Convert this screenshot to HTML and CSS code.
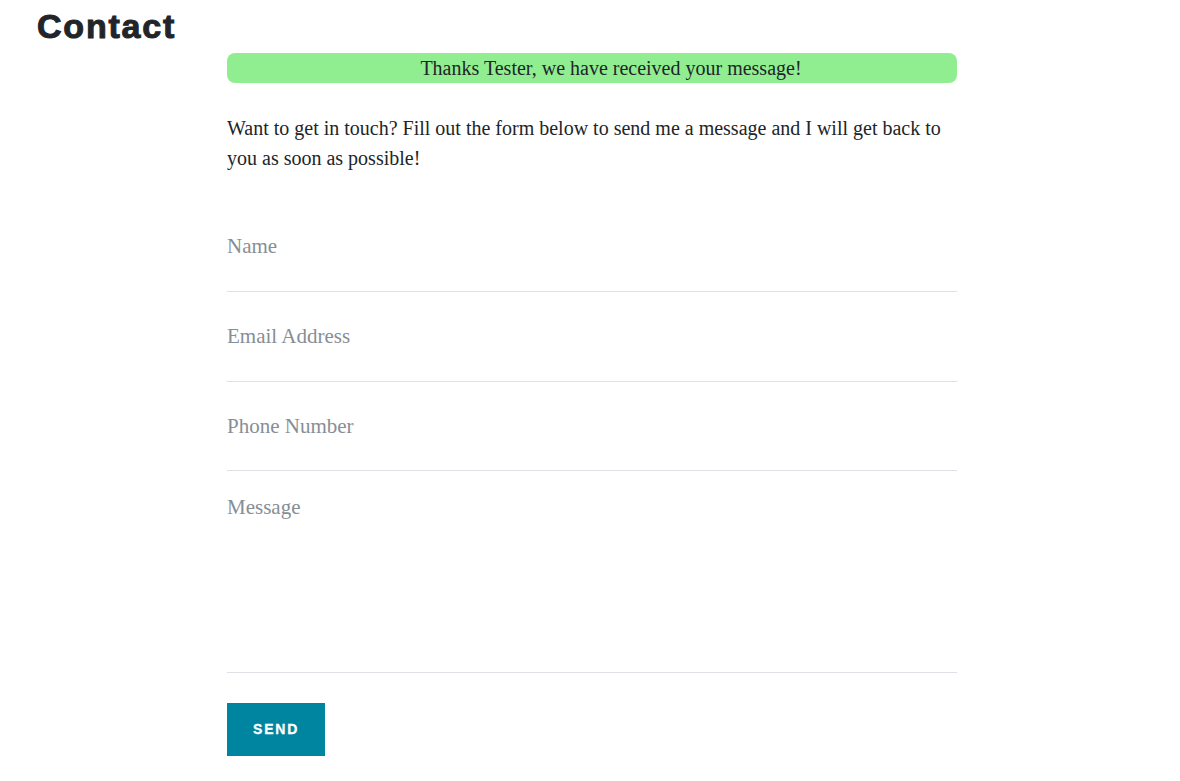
FILE: index.html
```html
<!DOCTYPE html>
<html lang="en">
<head>
<meta charset="utf-8">
<title>Contact</title>
<link rel="stylesheet" href="styles.css">
</head>
<body>
<h1 class="page-title">Contact</h1>
<main class="content">
  <div class="alert">Thanks Tester, we have received your message!</div>
  <p class="intro">Want to get in touch? Fill out the form below to send me a message and I will get back to you as soon as possible!</p>
  <form class="contact-form">
    <div class="field"><input class="input" type="text" placeholder="Name"></div>
    <div class="field"><input class="input" type="email" placeholder="Email Address"></div>
    <div class="field field-short"><input class="input" type="tel" placeholder="Phone Number"></div>
    <div class="field field-message"><textarea class="textarea" placeholder="Message"></textarea></div>
    <button class="btn-send" type="button">Send</button>
  </form>
</main>
</body>
</html>
```

FILE: styles.css
```css
* { box-sizing: border-box; }
html, body { margin: 0; padding: 0; background: #fff; }
body {
  font-family: "Liberation Serif", "Times New Roman", serif;
  color: #212529;
}
.page-title {
  margin: 6px 0 7px;
  padding-left: 37px;
  font-family: "Liberation Sans", Arial, sans-serif;
  font-weight: 700;
  font-size: 34px;
  line-height: 40px;
  letter-spacing: 1.8px;
  color: #212529;
  -webkit-text-stroke: 1px #212529;
}
.content {
  width: 730px;
  margin-left: 227px;
}
.alert {
  background: #90ee90;
  border-radius: 8px;
  height: 30px;
  line-height: 30px;
  padding-left: 38px;
  font-size: 20px;
  text-align: center;
  color: #212529;
}
.intro {
  margin: 30px 0 29px;
  font-size: 20px;
  line-height: 30px;
}
.contact-form { display: flex; flex-direction: column; }
.field {
  border-bottom: 1px solid #dee2e6;
  padding: 25px 0 25px;
}
.field-short { padding-bottom: 24px; }
.input, .textarea {
  display: block;
  width: 100%;
  border: none;
  outline: none;
  background: none;
  padding: 0;
  margin: 0;
  font-family: "Liberation Serif", "Times New Roman", serif;
  font-size: 21px;
  color: #212529;
}
.input { height: 39px; }
.field-message { padding: 21px 0 20px; }
.textarea {
  height: 160px;
  line-height: 31.5px;
  resize: none;
}
.input::placeholder, .textarea::placeholder { color: #868e96; opacity: 1; }
.btn-send {
  align-self: flex-start;
  margin-top: 30px;
  background: #0085a1;
  border: 1px solid #0085a1;
  color: #fff;
  font-family: "Liberation Sans", Arial, sans-serif;
  font-weight: 700;
  font-size: 14px;
  line-height: 21px;
  letter-spacing: 1.8px;
  text-transform: uppercase;
  padding: 15px 25px;
  border-radius: 0;
  -webkit-text-stroke: 0.3px #fff;
  cursor: pointer;
}
```
